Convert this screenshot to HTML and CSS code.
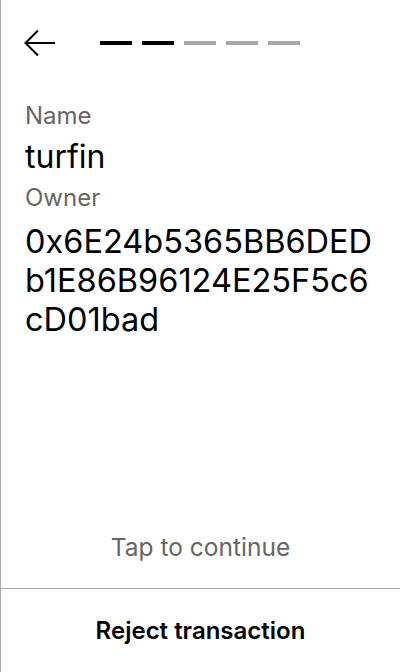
FILE: index.html
```html
<!DOCTYPE html>
<html>
<head>
<meta charset="utf-8">
<link rel="stylesheet" href="styles.css">
</head>
<body>
<div class="screen">
  <header class="header">
    <svg class="back" width="32" height="28" viewBox="0 0 32 28">
      <path d="M31 14H2M14 1.5L1.5 14L14 26.5" fill="none" stroke="#000" stroke-width="2"/>
    </svg>
    <div class="steps">
      <span class="step done"></span>
      <span class="step done"></span>
      <span class="step"></span>
      <span class="step"></span>
      <span class="step"></span>
    </div>
  </header>
  <main class="content">
    <div class="label">Name</div>
    <div class="value">turfin</div>
    <div class="label">Owner</div>
    <div class="address">0x6E24b5365BB6DEDb1E86B96124E25F5c6cD01bad</div>
  </main>
  <div class="tap">Tap to continue</div>
  <footer class="footer">Reject transaction</footer>
</div>
</body>
</html>
```
FILE: styles.css
```css
html, body {
  margin: 0;
  padding: 0;
  background: #fff;
}
body {
  font-family: Inter, "Noto Sans", sans-serif;
  color: #000;
}
.screen {
  width: 399px;
  height: 672px;
  border-left: 1px solid #a8a8a8;
  display: flex;
  flex-direction: column;
}
.header {
  height: 86px;
  display: flex;
  align-items: center;
  padding-left: 23px;
  gap: 44px;
}
.back {
  display: block;
}
.steps {
  display: flex;
  gap: 10px;
  margin-top: -1px;
}
.step {
  width: 32px;
  height: 4px;
  background: #a8a8a8;
}
.step.done {
  background: #000;
}
.content {
  padding: 15px 24px 0 24px;
  flex: 1;
}
.label {
  font-size: 24px;
  line-height: 30px;
  color: #666;
}
.value {
  font-size: 32px;
  line-height: 52px;
}
.address {
  margin-top: 9px;
  font-size: 32.5px;
  line-height: 39px;
  word-break: break-all;
}
.tap {
  text-align: center;
  font-size: 24.5px;
  color: #666;
  line-height: 30px;
  padding-bottom: 26px;
}
.footer {
  height: 83px;
  border-top: 1px solid #a8a8a8;
  display: flex;
  align-items: center;
  justify-content: center;
  font-size: 24px;
  font-weight: 600;
}
```
